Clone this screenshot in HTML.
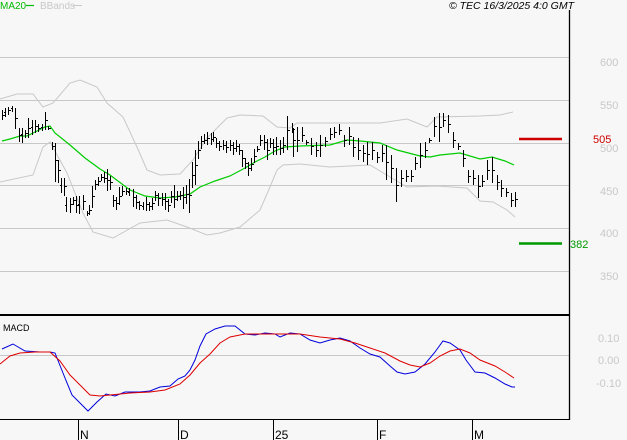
<!DOCTYPE html>
<html><head><meta charset="utf-8"><style>
html,body{margin:0;padding:0;background:#f7f7f7;}
svg{display:block;font-family:"Liberation Sans",sans-serif;}
</style></head><body>
<svg width="627" height="440" viewBox="0 0 627 440" xmlns="http://www.w3.org/2000/svg">
<rect width="627" height="440" fill="#f7f7f7"/>
<g stroke="#c8c8c8" stroke-width="1" fill="none">
<path d="M0 57.5H569M0 100.5H569M0 143.5H569M0 185.5H569M0 228.5H569M0 271.5H569M0 355.5H569"/>
</g>
<g fill="#c8c8c8" font-size="11">
<text x="600" y="66">600</text><text x="600" y="109">550</text><text x="600" y="152">500</text>
<text x="600" y="195">450</text><text x="600" y="237">400</text><text x="600" y="280">350</text>
<text x="598" y="342">0.10</text><text x="598" y="364">0.00</text><text x="596" y="387">-0.10</text>
</g>
<text x="593" y="143" fill="#cc0000" font-size="11">505</text>
<text x="570" y="248" fill="#009900" font-size="11">382</text>
<path d="M519 139H562" stroke="#cc0000" stroke-width="2.5"/>
<path d="M519 243.5H562" stroke="#009900" stroke-width="2.5"/>
<polyline fill="none" stroke="#c8c8c8" points="0,99 17,94 33,94 43,107 53,103 70,83 80,80 97,87 107,103 123,117 137,147 147,170 160,175 180,174 193,160 207,138 227,118 240,115 263,116 277,127 290,128 297,123 330,123 380,123 407,119 427,127 437,117 480,116 500,115 513,112"/>
<polyline fill="none" stroke="#c8c8c8" points="0,182 33,175 43,147 50,142 67,173 83,213 93,232 113,238 140,223 167,220 187,227 207,235 220,233 240,227 260,210 270,187 277,170 283,165 300,164 330,167 370,165 390,177 407,187 437,186 467,188 480,201 493,202 507,210 515,217"/>
<polyline fill="none" stroke="#00cc00" stroke-width="1.2" points="2,141 10,139 20,136 27,136 35,132 45,127 50,126 55,133 70,145 85,158 100,169 110,175 130,190 145,196 160,198 175,197 190,194 200,187 215,181 230,176 245,168 255,162 265,157 275,151 285,147 300,146 330,145 347,140 360,141 380,143 397,150 420,156 430,157 440,155 460,153 480,159 492,157 505,161 514,165"/>
<path stroke="#000" stroke-width="1" fill="none" d="
M2.5 110V120M5.5 108V117M8.5 107V115M12.5 106V112M15.5 108V129M19.5 128V142M22.5 128V143M25.5 130V138M28.5 118V138M32.5 120V135M35.5 120V133M38.5 124V132M42.5 124V131M45.5 112V130M48.5 126V130M52.5 142V150M55.5 143V182M58.5 160V183M61.5 178V193M64.5 178V196M66.5 197V212M70.5 198V213M73.5 197V205M76.5 196V213M79.5 196V214M83.5 195V210M87.5 211V216M89.5 205V215M92.5 186V208M95.5 180V190M98.5 177V186M101.5 174V181M104.5 172V183M107.5 169V191M110.5 176V190M113.5 195V207M116.5 197V210M119.5 187V205M122.5 186V196M126.5 188V195M129.5 188V196M133.5 189V207M136.5 195V209M139.5 201V210M143.5 202V210M146.5 197V211M149.5 202V211M152.5 198V210M155.5 191V201M158.5 193V206M162.5 193V206M165.5 193V210M168.5 199V212M171.5 191V203M174.5 185V208M177.5 191V201M180.5 191V200M183.5 187V209M186.5 185V204M189.5 179V213M192.5 162V188M195.5 150V185M198.5 141V159M201.5 136V149M204.5 134V144M207.5 132V145M211.5 133V145M213.5 132V142M216.5 138V148M219.5 141V151M223.5 140V150M226.5 141V153M230.5 140V151M233.5 142V155M236.5 140V152M239.5 144V155M242.5 150V167M245.5 158V169M248.5 162V176M251.5 158V171M254.5 149V163M257.5 146V152M260.5 135V146M264.5 135V150M267.5 139V160M270.5 138V148M273.5 139V155M276.5 137V155M280.5 140V155M283.5 137V153M287.5 116V150M292.5 123V133M293.5 128V157M297.5 127V152M302.5 127V142M306.5 140V145M311.5 138V155M316.5 142V157M320.5 135V157M325.5 137V147M330.5 128V140M334.5 127V138M339.5 124V135M344.5 135V147M349.5 127V145M353.5 137V157M358.5 138V160M363.5 145V162M367.5 142V165M372.5 142V160M377.5 152V163M382.5 145V162M386.5 145V180M391.5 155V183M396.5 168V202M401.5 170V187M406.5 170V182M411.5 170V182M415.5 157V170M420.5 143V168M425.5 142V158M429.5 138V143M434.5 117V137M439.5 113V142M443.5 113V127M448.5 115V133M453.5 132V148M458.5 143V150M463.5 150V167M468.5 170V183M473.5 170V185M478.5 175V198M482.5 175V187M487.5 160V180M492.5 157V183M497.5 175V190M501.5 180V197M506.5 188V197M511.5 193V207M515.5 192V207"/>
<path stroke="#000" stroke-width="1" fill="none" d="
M3 115.5h2M6 112.5h-2M9 110.5h2M13 108.5h-2M16 118.5h2M20 135.5h2M23 134.5h-2M26 133.5h2M29 128.5h2M33 127.5h-2M36 126.5h2M39 128.5h2M43 127.5h-2M46 120.5h2M49 128.5h2M53 146.5h2M56 160.5h2M59 170.5h2M62 185.5h-2M65 186.5h2M67 205.5h-2M71 204.5h2M74 200.5h2M77 205.5h2M80 204.5h-2M84 201.5h2M88 213.5h2M90 210.5h2M93 196.5h2M96 184.5h2M99 181.5h2M102 177.5h2M105 178.5h2M108 180.5h2M111 182.5h2M114 200.5h2M117 203.5h2M120 196.5h2M123 191.5h2M127 191.5h2M130 192.5h-2M134 197.5h2M137 202.5h2M140 205.5h2M144 206.5h-2M147 204.5h2M150 206.5h2M153 203.5h2M156 195.5h2M159 198.5h2M163 199.5h2M166 201.5h2M169 205.5h2M172 196.5h2M175 199.5h2M178 196.5h2M181 195.5h2M184 197.5h2M187 194.5h2M190 195.5h2M193 175.5h2M196 165.5h2M199 150.5h2M202 141.5h2M205 140.5h2M208 138.5h2M212 139.5h2M214 137.5h2M217 143.5h2M220 146.5h2M224 145.5h2M227 147.5h2M231 145.5h2M234 148.5h2M237 146.5h2M240 150.5h2M243 158.5h2M246 163.5h2M249 168.5h2M252 164.5h2M255 156.5h2M258 149.5h2M261 140.5h2M265 142.5h2M268 150.5h2M271 143.5h2M274 147.5h2M277 146.5h2M281 148.5h2M284 145.5h2M288 130.5h2M293 129.5h2M294 140.5h2M298 140.5h2M303 135.5h2M307 142.5h2M312 146.5h2M317 150.5h2M321 145.5h2M326 141.5h2M331 134.5h2M335 132.5h2M340 130.5h2M345 140.5h2M350 136.5h2M354 147.5h2M359 150.5h2M364 153.5h2M368 154.5h2M373 150.5h2M378 157.5h2M383 153.5h2M387 162.5h2M392 168.5h2M397 185.5h2M402 178.5h2M407 176.5h2M412 176.5h2M416 163.5h2M421 155.5h2M426 150.5h2M430 140.5h2M435 126.5h2M440 127.5h2M444 120.5h2M449 124.5h2M454 140.5h2M459 146.5h2M464 158.5h2M469 176.5h2M474 178.5h2M479 186.5h2M483 181.5h2M488 170.5h2M493 170.5h2M498 182.5h2M502 188.5h2M507 192.5h2M512 200.5h2M516 199.5h2"/>
<path d="M569.5 10V420" stroke="#000" stroke-width="1.3"/>
<path d="M0 315H569" stroke="#000" stroke-width="2"/>
<path d="M0 419.5H569" stroke="#000" stroke-width="1"/>
<path d="M78.5 419V440M178.5 419V440M273.5 419V440M377.5 419V440M472.5 419V440" stroke="#000"/>
<g font-size="12" fill="#000">
<text x="80" y="439">N</text><text x="180" y="439">D</text><text x="275" y="439">25</text><text x="379" y="439">F</text><text x="474" y="439">M</text>
</g>
<text x="3" y="331" font-size="9" fill="#000">MACD</text>
<polyline fill="none" stroke="#0000dd" stroke-width="1" points="2,349 13,344 25,351 40,352 50,352 55,353 65,378 72,395 80,403 88,411 97,402 106,394 115,396 125,392 140,392 150,391 160,387 170,386 178,379 185,376 190,370 195,360 200,346 206,334 215,329 225,326 235,326 245,334 255,335 265,333 275,334 280,337 290,333 300,334 310,340 320,343 330,340 340,338 350,341 360,348 370,354 380,357 390,366 397,372 405,374 415,372 425,364 435,352 443,341 450,343 460,350 466,360 475,372 485,373 495,378 505,384 512,387 515,387"/>
<polyline fill="none" stroke="#dd0000" stroke-width="1" points="0,364 10,356 20,353 35,352 50,352 60,361 70,375 80,385 90,395 100,396 110,395 130,393 150,392 165,390 180,384 190,375 200,363 210,354 220,343 230,337 245,334 270,334 300,334 320,337 340,339 355,343 370,348 385,353 400,361 410,365 420,367 430,363 440,356 450,351 460,349 470,353 480,360 495,366 505,372 514,378"/>
<text x="0" y="9" font-size="10" fill="#00bb00">MA20</text>
<path d="M26 5.5H34" stroke="#00bb00" stroke-width="1.2"/>
<text x="40" y="9" font-size="10" fill="#c8c8c8">BBands</text>
<path d="M73 5.5H82" stroke="#c8c8c8"/>
<text x="574" y="9" font-size="10.5" font-style="italic" fill="#000" text-anchor="end">© TEC 16/3/2025 4:0 GMT</text>
</svg>
</body></html>
